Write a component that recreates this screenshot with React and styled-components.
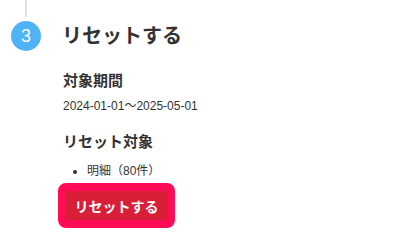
import React from 'react'
import styled, { createGlobalStyle } from 'styled-components'

const GlobalStyle = createGlobalStyle`
	body {
		margin: 0;
		background: #fff;
		font-family: "Liberation Sans", Arial, "Noto Sans CJK JP", sans-serif;
		color: #333;
	}
`

const Step = styled.section`
	padding: 0 0 14px 11px;
`

const Connector = styled.div`
	width: 2px;
	height: 17px;
	margin-left: 14px;
	margin-bottom: 4px;
	background-color: #e0e0e0;
`

const Header = styled.div`
	display: flex;
	align-items: center;
	gap: 21px;
`

const Marker = styled.div`
	width: 30px;
	height: 30px;
	border-radius: 50%;
	background-color: #4fb3f5;
	color: #fff;
	font-size: 18px;
	display: flex;
	align-items: center;
	justify-content: center;
`

const Title = styled.h2`
	margin: 0;
	font-size: 20px;
	line-height: 28px;
	font-weight: bold;
	color: #333;
`

const Body = styled.div`
	padding-left: 52px;
`

const Label = styled.h3`
	margin: ${p => p.$top}px 0 0;
	font-size: 15px;
	line-height: 22px;
	font-weight: bold;
`

const Period = styled.p`
	margin: 4px 0 0;
	font-size: 12px;
	line-height: 20px;
`

const List = styled.ul`
	margin: 8px 0 0;
	padding-left: 24px;
	font-size: 12px;
	line-height: 20px;
`

const ResetButton = styled.button`
	display: block;
	margin: 2px 0 0 -5px;
	box-sizing: border-box;
	height: 45px;
	padding: 0 9.5px;
	border-style: solid;
	border-color: #ff0c57;
	border-width: 8px 7px;
	border-radius: 8px;
	background-color: #d91f38;
	color: #fff;
	font-family: inherit;
	font-size: 14px;
	font-weight: bold;
	cursor: pointer;
`

const App = () => {
	return (
		<>
			<GlobalStyle />
			<Step>
				<Connector />
				<Header>
					<Marker>3</Marker>
					<Title>リセットする</Title>
				</Header>
				<Body>
					<Label $top={19}>対象期間</Label>
					<Period>2024-01-01～2025-05-01</Period>
					<Label $top={15}>リセット対象</Label>
					<List>
						<li>明細（80件）</li>
					</List>
					<ResetButton>リセットする</ResetButton>
				</Body>
			</Step>
		</>
	)
}

export default App
